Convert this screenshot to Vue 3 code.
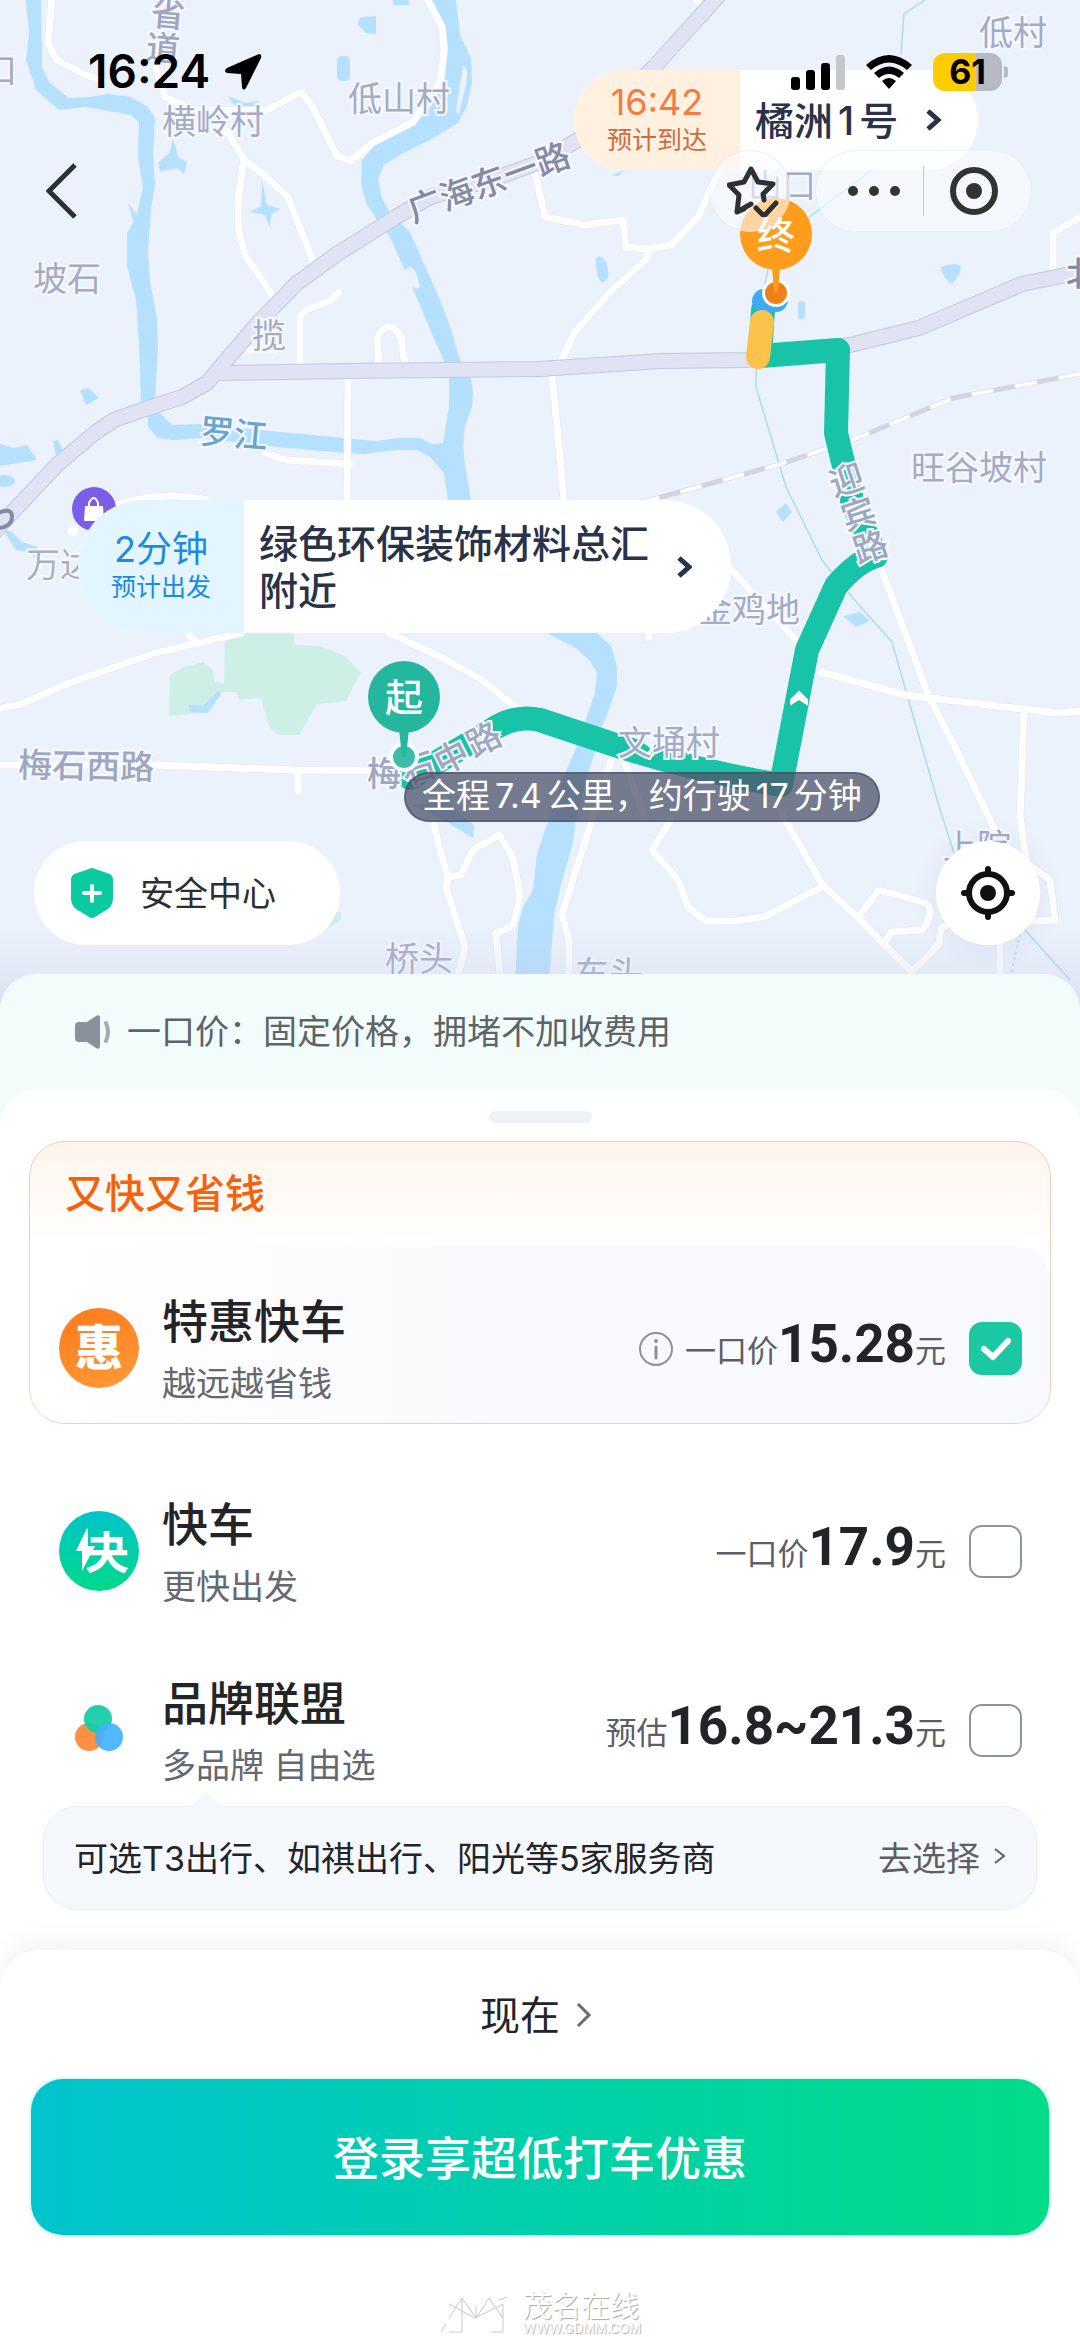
<template>
  <div class="page" lang="zh-CN">
    <section class="map-area">
      <svg class="map" viewBox="0 0 1080 1020" preserveAspectRatio="xMidYMin slice" aria-hidden="true">
        <!-- park -->
        <g fill="#cdefe6">
          <path d="M225 633 L293 633 L295 645 L320 646 L343 655 L361 672 L346 701 L317 704 L299 735 L279 735 L269 727 L261 698 L239 700 L236 692 L222 692 L207 713 L169 716 L170 675 L184 667 L203 662 L213 670 L215 682 L224 683 Z" />
          <path d="M333 912 L341 912 L341 920 L328 928 Z" />
        </g>
        <!-- water -->
        <g fill="#b5e0fe">
          <path d="M26 0 L29 33 L26 60 L36 90 L59 110 L86 107 L131 115 L139 122 L138 157 L143 187 L136 217 L127 233 L127 266 L136 300 L139 344 L141 400 L148 413 L148 427 L158 438 L172 440 L200 438 L268 446 L344 453 L365 454 L396 450 L417 450 L430 457 L444 473 L448 500 L480 560 L547 633 L577 649 L590 661 L597 672 L595 693 L588 713 L574 753 L566 771 L545 830 L537 854 L533 890 L523 907 L518 926 L513 1020 L546 1020 L554 916 L561 884 L573 843 L576 820 L588 773 L597 746 L602 727 L611 704 L617 686 L617 667 L611 646 L597 633 L520 570 L471 500 L465 465 L463 445 L465 426 L472 407 L473 392 L471 378 L461 363 L458 353 L451 329 L440 300 L425 266 L410 232 L390 213 L382 198 L378 179 L384 165 L400 155 L430 140 L458 123 L467 106 L472 82 L471 58 L460 35 L456 0 L430 0 L442 20 L448 44 L445 82 L427 113 L400 131 L375 145 L362 160 L361 184 L366 203 L379 223 L390 237 L403 266 L420 305 L434 339 L444 361 L449 378 L449 407 L443 443 L432 444 L420 438 L400 438 L375 441 L344 438 L270 431 L200 424 L172 425 L160 413 L155 400 L158 348 L157 319 L150 281 L148 252 L151 210 L155 184 L153 155 L155 118 L148 107 L131 97 L108 94 L90 97 L69 98 L50 83 L42 67 L41 0 Z" />
          <path d="M173 138 L178 157 L187 162 L184 174 L177 168 L168 170 L160 171 L158 163 L170 152 Z" />
          <path d="M262 180 L267 205 L281 209 L271 214 L270 228 L265 215 L250 212 L261 206 Z" />
          <path d="M360 17 L376 16 L376 34 L366 33 L358 25 Z" />
          <rect x="337" y="56" width="13" height="25" rx="5" />
          <rect x="393" y="0" width="16" height="5" />
          <path d="M228 96 L245 103 L259 101 L258 106 L235 106 Z" />
          <path d="M128 203 L135 212 L140 222 L133 220 Z" />
          <path d="M80 390 L88 388 L99 398 L86 405 Z" />
          <path d="M0 444 L14 448 L27 445 L37 460 L0 466 Z" />
          <path d="M53 441 L58 440 L65 455 L48 462 L56 456 Z" />
          <ellipse cx="4" cy="481" rx="11" ry="6" />
          <path d="M2 528 L12 532 L22 542 L38 547 L36 560 L30 552 L16 550 Z" />
          <path d="M188 705 L203 706 L219 690 L221 694 L208 713 L190 712 Z" />
          <path d="M412 805 L446 802 L474 825 L473 838 L440 818 Z" />
          <path d="M596 258 Q601 254 606 262 Q612 280 603 282 Q596 282 596 258 Z" />
          <path d="M941 267 Q951 263 961 265 Q961 275 952 284 Q942 278 941 267 Z" />
          <rect x="798" y="301" width="7" height="18" rx="3" />
          <path d="M612 175 L625 170 L618 176 Z" />
          <path d="M776 512 L786 503 L792 512 L783 522 Z" />
          <path d="M843 616 L860 612 L870 621 L856 627 Z" />
        </g>
        <g fill="#ecf2fc">
          <path d="M405 270 Q411 262 417 275 L420 287 Q413 292 408 280 Z" />
          <path d="M463 66 Q469 66 466 85 L459 113 Q455 116 457 104 Z" />
        </g>
        <g fill="none" stroke="#a9dcf8" stroke-width="1.5">
          <path d="M925 0 L904 14 L901 54" />
          <path d="M872 170 L808 218 M768 270 L757 320 L756 387 L768 427 L786 487 L822 560 L852 597 L892 642 L938 803 L954 853 M1024 929 L1070 980" />
          <path d="M1020 934 L1011 974" stroke-dasharray="3 3" />
        </g>

        <!-- small roads -->
        <g class="road-edge"><path v-for="d in roads" :key="d" :d="d" /></g>
        <g class="road"><path v-for="d in roads" :key="d" :d="d" /></g>

        <!-- railway -->
        <path class="rail" d="M1080 374 L953 398 L860 437 L781 464 L640 503" />
        <path class="rail-dash" d="M1080 374 L953 398 L860 437 L781 464 L640 503" />

        <!-- main roads -->
        <g class="main-edge"><path v-for="d in mainRoads" :key="d" :d="d" /></g>
        <g class="main-road"><path v-for="d in mainRoads" :key="d" :d="d" /></g>

        <!-- route -->
        <g fill="none" stroke-width="24" stroke-linecap="round" stroke-linejoin="round">
          <path d="M410 778 L490 731 Q514 714 540 720 L609 743 Q690 770 781 785 L807 650 L836 586 Q856 562 876 556 L852 500 L836 433 L838 350 L760 356 L763 310" stroke="#18c3a8" />
          <path d="M764 301 L776 300" stroke="#3dabf4" />
          <path d="M758 357 L762 322" stroke="#fbc24c" />
        </g>
        <path d="M791 700 L799 692 L807 700 L807 704 L799 699 L791 704 Z" fill="#fff" stroke="#fff" stroke-width="2" />
        <path d="M641 741 L655 744 L649 758 L646 757 L650 748 Z" fill="#fff" />

        <!-- mall poi -->
        <circle cx="94" cy="509" r="22" fill="#7d5de8" />
        <path d="M85 506 H103 L104 521 H84 Z" fill="#fff" />
        <path d="M89 507 V503 Q94 493 98 503 V507" fill="none" stroke="#fff" stroke-width="2" />
        <circle cx="73" cy="531" r="5" fill="#fff" />
        <path d="M-4 514 Q12 506 12 517 Q12 526 0 528" fill="none" stroke="#858ba4" stroke-width="4" />

        <text
          v-for="(t, i) in labels"
          :key="i"
          :class="['label', t.kind]"
          :transform="`translate(${t.x} ${t.y}) rotate(${t.r || 0})`"
        >{{ t.text }}</text>

        <!-- start marker -->
        <circle cx="404" cy="757" r="15" fill="#fff" />
        <circle cx="404" cy="757" r="11" fill="#3fbca7" />
        <path d="M399 729 H409 L406 757 H402 Z" fill="#25b79d" />
        <circle cx="404" cy="697" r="36" fill="#25b79d" />
        <text class="pin-text" x="404" y="711">起</text>
        <!-- end marker -->
        <circle cx="776" cy="293" r="14" fill="#fff" />
        <circle cx="776" cy="293" r="11" fill="#f0801a" />
        <path d="M772 268 H780 L778 292 H774 Z" fill="#ff9c1c" />
        <circle cx="776" cy="234" r="36" fill="#ff9c1c" />
        <text class="pin-text" x="776" y="249">终</text>
      </svg>

      <button class="trip-badge to">
        <span class="time"><b>16:42</b><small>预计到达</small></span>
        <span class="place">橘洲<i>1</i>号</span>
        <svg width="16" height="24" viewBox="0 0 16 24"><path d="M3 3 L13 12 L3 21" /></svg>
      </button>
      <button class="trip-badge from">
        <span class="time"><b>2分钟</b><small>预计出发</small></span>
        <span class="place">绿色环保装饰材料总汇<br>附近</span>
        <svg width="16" height="24" viewBox="0 0 16 24"><path d="M3 3 L13 12 L3 21" /></svg>
      </button>
      <div class="summary">全程<i>7.4</i>公里，约行驶<i>17</i>分钟</div>

      <header class="status-bar">
        <span class="clock">16:24</span>
        <svg class="locate-arrow" width="38" height="38" viewBox="0 0 38 38">
          <path d="M35 1 Q38 1 37 5 L22 35 Q19 39 18 34 L17 21 L3 20 Q-1 18 3 15 Z" />
        </svg>
        <svg width="54" height="36" viewBox="0 0 54 36">
          <rect x="0" y="23" width="9" height="13" rx="3" />
          <rect x="15" y="16" width="9" height="20" rx="3" />
          <rect x="30" y="9" width="9" height="27" rx="3" />
          <rect x="45" y="1" width="9" height="35" rx="3" fill="#c6c7ca" />
        </svg>
        <svg class="wifi" width="46" height="36" viewBox="0 0 46 36">
          <path d="M0 11 Q23 -9 46 11 L41 16 Q23 1 5 16 Z" />
          <path d="M8 19 Q23 6 38 19 L33 24 Q23 16 13 24 Z" />
          <path d="M16 27 Q23 21 30 27 L23 35 Z" />
        </svg>
        <span class="battery">61</span>
      </header>

      <nav class="nav-bar">
        <button class="back" aria-label="返回">
          <svg width="32" height="56" viewBox="0 0 32 56"><path d="M29 2 L3 28 L29 54" /></svg>
        </button>
        <button class="glass star" aria-label="收藏">
          <svg width="52" height="52" viewBox="0 0 52 52">
            <path d="M17 44 L10 47 L12 30 L2 20 L17 17 L24 4 L31 17 L46 19 L36 29 L37 35 M10 47 L24 39" />
            <path d="M29 43 L37 51 L49 38" />
          </svg>
        </button>
        <div class="glass capsule">
          <button class="more" aria-label="更多">
            <svg width="54" height="12" viewBox="0 0 54 12">
              <circle cx="6" cy="6" r="5" /><circle cx="27" cy="6" r="5" /><circle cx="48" cy="6" r="5" />
            </svg>
          </button>
          <span class="divider"></span>
          <button class="close" aria-label="关闭">
            <svg width="50" height="50" viewBox="0 0 50 50">
              <circle cx="25" cy="25" r="21" fill="none" stroke="#333" stroke-width="6" />
              <circle cx="25" cy="25" r="8" />
            </svg>
          </button>
        </div>
      </nav>

      <div class="map-tools">
        <button class="safety">
          <svg width="44" height="50" viewBox="0 0 44 50">
            <path d="M19 1 Q22 -1 25 1 L40 6 Q43 8 43 11 V30 Q43 37 38 41 L25 49 Q22 51 19 49 L6 41 Q1 37 1 30 V11 Q1 8 4 6 Z" fill="#09cb9f" />
            <path d="M22 18 V33 M14 25 H30" stroke="#fff" stroke-width="4" stroke-linecap="round" />
          </svg>
          <span>安全中心</span>
        </button>
        <button class="locate" aria-label="定位">
          <svg width="54" height="54" viewBox="0 0 54 54">
            <circle cx="27" cy="27" r="19" fill="none" stroke="#111" stroke-width="6" />
            <circle cx="27" cy="27" r="8" fill="#111" />
            <path d="M27 3 V8 M27 46 V51 M3 27 H8 M46 27 H51" stroke="#111" stroke-width="6" stroke-linecap="round" />
          </svg>
        </button>
      </div>
    </section>

    <main class="sheet">
      <p class="notice">
        <svg width="36" height="34" viewBox="0 0 36 34">
          <path d="M4 7 H12 L21 1 Q25 -1 25 3 V31 Q25 35 21 33 L12 27 H4 Q0 27 0 23 V11 Q0 7 4 7 Z" fill="#8a909c" />
          <path d="M31 8 Q35 17 31 26" fill="none" stroke="#a4a9b3" stroke-width="4" stroke-linecap="round" />
        </svg>
        <span>一口价：固定价格，拥堵不加收费用</span>
      </p>

      <div class="list">
        <div class="handle"></div>

        <section class="promo">
          <h2>又快又省钱</h2>
          <div class="option picked">
            <svg class="logo" viewBox="0 0 81 81">
              <defs>
                <linearGradient id="hui" x1="0" y1="0" x2="0.4" y2="1">
                  <stop offset="0" stop-color="#ff7a1c" /><stop offset="1" stop-color="#ff9533" />
                </linearGradient>
              </defs>
              <circle cx="40" cy="40" r="40" fill="url(#hui)" />
              <text x="40" y="57" class="logo-text">惠</text>
            </svg>
            <div class="info"><h3>特惠快车</h3><p>越远越省钱</p></div>
            <button class="tip-icon" aria-label="价格说明">
              <svg width="34" height="34" viewBox="0 0 34 34">
                <circle cx="17" cy="17" r="16" fill="none" stroke="#8d9199" stroke-width="2" />
                <circle cx="17" cy="9" r="2" fill="#8d9199" />
                <path d="M17 15 V26" stroke="#8d9199" stroke-width="3" stroke-linecap="round" />
              </svg>
            </button>
            <div class="price">一口价<strong>15.28</strong>元</div>
            <label class="check">
              <input v-model="picked" type="checkbox" value="hui" aria-label="特惠快车">
              <svg v-if="picked.includes('hui')" viewBox="0 0 53 53"><path d="M15 27 L24 35 L39 19" /></svg>
            </label>
          </div>
        </section>

        <div class="option">
          <svg class="logo" viewBox="0 0 81 81">
            <defs>
              <linearGradient id="kuai" x1="0" y1="0" x2="0" y2="1">
                <stop offset="0" stop-color="#00c4ca" /><stop offset="1" stop-color="#02d98a" />
              </linearGradient>
            </defs>
            <circle cx="40" cy="40" r="40" fill="url(#kuai)" />
            <path d="M28 17 L17 40 H23 V60 L36 35 H29 V19 Z" fill="#fff" />
            <text x="48" y="58" class="logo-text small">夬</text>
          </svg>
          <div class="info"><h3>快车</h3><p>更快出发</p></div>
          <div class="price">一口价<strong>17.9</strong>元</div>
          <label class="check">
            <input v-model="picked" type="checkbox" value="kuai" aria-label="快车">
            <svg v-if="picked.includes('kuai')" viewBox="0 0 53 53"><path d="M15 27 L24 35 L39 19" /></svg>
          </label>
        </div>

        <div class="option">
          <svg class="logo" viewBox="0 0 81 81">
            <circle cx="30" cy="47" r="14" fill="#ff8f45" />
            <circle cx="39" cy="29" r="14" fill="#16cda6" fill-opacity="0.95" />
            <circle cx="50" cy="47" r="14" fill="#3fb0ff" fill-opacity="0.9" />
          </svg>
          <div class="info"><h3>品牌联盟</h3><p>多品牌 自由选</p></div>
          <div class="price">预估<strong>16.8~21.3</strong>元</div>
          <label class="check">
            <input v-model="picked" type="checkbox" value="brand" aria-label="品牌联盟">
            <svg v-if="picked.includes('brand')" viewBox="0 0 53 53"><path d="M15 27 L24 35 L39 19" /></svg>
          </label>
        </div>

        <div class="brands">
          <span>可选T3出行、如祺出行、阳光等5家服务商</span>
          <button>
            <span>去选择</span>
            <svg width="12" height="18" viewBox="0 0 12 18"><path d="M1 2 L10 9 L1 16" /></svg>
          </button>
        </div>
      </div>
    </main>

    <footer class="order">
      <button class="when">
        <span>现在</span>
        <svg width="16" height="26" viewBox="0 0 16 26"><path d="M2 2 L13 13 L2 24" /></svg>
      </button>
      <button class="submit">登录享超低打车优惠</button>
      <div class="watermark">
        <svg width="76" height="38" viewBox="0 0 76 38">
          <path d="M10 8 L36 22 L64 8 M10 22 L23 2 L37 22 L50 2 L64 22 M23 2 V36 H10 M64 8 V36 H52 M37 10 V22 M2 36 L7 28 M60 4 L68 1" />
        </svg>
        <div><b>茂名在线</b><small>WWW.GDMM.COM</small></div>
      </div>
    </footer>
  </div>
</template>

<script setup>
import { ref } from 'vue'

const picked = ref(['hui'])

const mainRoads = [
  'M220 373 L344 371 L540 369 L660 361 L747 360 L850 345 L919 328 L1022 284 L1090 270',
  'M722 -8 L654 67 L578 140 L540 162 L499 177 L430 197 L396 217 L337 254 L296 284 L258 323 L224 363 L207 383 L182 397 L145 409 L114 420 L96 432 L58 464 L3 522 L-12 540'
]

const roads = [
  'M52 -5 L48 44 L57 60 L83 74 L103 81',
  'M156 68 L165 97 L193 110 L224 127 L244 159 L265 176 L288 197 L315 266',
  'M244 159 L238 200 L239 233 L246 257 L265 284 L275 300',
  'M193 110 L265 111 L301 92 L312 106 L337 156 L351 161 L372 143 L413 122 L440 82 L444 50 L442 27 L425 -5',
  'M300 365 V317 L306 310 L331 300 L339 292',
  'M379 365 L377 337 Q389 316 401 337 L405 365',
  'M348 379 L347 500',
  'M265 453 L286 460 L351 464',
  'M248 350 L275 350',
  'M535 173 L545 217 L585 225 L623 220 L626 247 L647 249 L671 245 L698 217 L719 170',
  'M648 249 V258 L612 290 L574 333 L561 362',
  'M552 375 L564 500',
  'M692 -5 L702 7',
  'M1084 215 L1053 233 V270',
  'M117 505 Q160 490 207 500',
  'M-4 709 L21 704 L69 683 L155 653 L241 633',
  'M189 635 L198 644',
  'M389 633 L441 657 L482 680 L517 708',
  'M-4 765 L158 765 L293 770 L406 771',
  'M298 770 V792',
  'M729 567 L795 639',
  'M821 672 L905 695 L988 705 L1057 713 L1084 711',
  'M881 568 L929 697 L953 743 L995 830',
  'M1024 711 L1020 817 L1027 863 L1050 880 L1055 920 L1032 921',
  'M781 813 L822 884 L857 917 L912 972 L939 944 L941 928 L960 920',
  'M671 820 L652 850 L678 880 L688 907 L705 921 L736 921 L764 917 L822 887',
  'M860 915 L879 890 L926 903 Q936 912 922 930 L891 932 L884 945',
  'M612 757 L562 914 L569 940 V985',
  'M623 757 L643 813',
  'M434 824 L439 847 L448 877 L446 887 L465 947 L456 985',
  'M448 877 L461 875 L473 850 L499 835 L513 857 L520 896 L513 926 L496 933 L501 985',
  'M1000 944 V985',
  'M649 638 V630'
]

const labels = [
  { text: '口', x: -17, y: 83 },
  { text: '省', x: 150, y: 25, r: 5, kind: 'strong' },
  { text: '道', x: 145, y: 59, r: 5, kind: 'strong' },
  { text: '横岭村', x: 162, y: 134 },
  { text: '低山村', x: 348, y: 111 },
  { text: '坡石', x: 33, y: 291 },
  { text: '揽', x: 252, y: 348 },
  { text: '罗江', x: 199, y: 443, r: 5, kind: 'water' },
  { text: '广海东一路', x: 413, y: 223, r: -20, kind: 'dark' },
  { text: '低村', x: 979, y: 45 },
  { text: '山口', x: 748, y: 198 },
  { text: '北', x: 1066, y: 286, kind: 'dark' },
  { text: '旺谷坡村', x: 911, y: 480 },
  { text: '迎', x: 834, y: 497, r: -18, kind: 'strong' },
  { text: '宾', x: 846, y: 531, r: -18, kind: 'strong' },
  { text: '路', x: 858, y: 564, r: -18, kind: 'strong' },
  { text: '金鸡地', x: 698, y: 622 },
  { text: '文埇村', x: 618, y: 755 },
  { text: '万达', x: 26, y: 577, kind: 'grey' },
  { text: '梅石西路', x: 18, y: 777, r: 1, kind: 'strong' },
  { text: '梅', x: 367, y: 786, kind: 'strong' },
  { text: '石', x: 406, y: 785, r: -18, kind: 'strong' },
  { text: '中', x: 442, y: 776, r: -27, kind: 'strong' },
  { text: '路', x: 474, y: 758, r: -27, kind: 'strong' },
  { text: '桥头', x: 385, y: 971 },
  { text: '车头', x: 575, y: 986 },
  { text: '上院', x: 943, y: 859 }
]
</script>

<style>
body { margin: 0; background: #fff; }
</style>

<style scoped>
.page {
  font-family: Inter, "Noto Sans CJK SC", sans-serif;
  color: #222427;
  min-height: 100vh;
  display: flex;
  flex-direction: column;
}
button { font-family: inherit; border: none; background: none; padding: 0; margin: 0; cursor: pointer; color: inherit; }
h2, h3, p { margin: 0; font-weight: 500; }
i { font-style: normal; }
svg { display: block; flex: none; }

/* map */
.map-area { position: relative; height: 1014px; background: #ecf2fc; display: flex; flex-direction: column; overflow: hidden; }
.map { position: absolute; inset: 0; width: 100%; height: 100%; }
.map-area::after {
  content: ''; position: absolute; left: 0; right: 0; bottom: 0; height: 90px;
  background: linear-gradient(rgba(200, 206, 228, 0), rgba(200, 206, 228, 0.5)); pointer-events: none;
}
.road, .road-edge, .main-road, .main-edge { fill: none; stroke-linejoin: round; stroke-linecap: round; }
.road-edge { stroke: #e0e5f1; stroke-width: 8px; }
.road { stroke: #fff; stroke-width: 7px; }
.main-edge { stroke: #c5c8da; stroke-width: 16px; }
.main-road { stroke: #dfe3f3; stroke-width: 14px; }
.rail { fill: none; stroke: #d3d6e2; stroke-width: 5px; }
.rail-dash { fill: none; stroke: #fff; stroke-width: 4px; stroke-dasharray: 22px 22px; }
.label { font-size: 34px; fill: #a3abc6; stroke: #f6f9fe; stroke-width: 4px; paint-order: stroke; }
.label.strong { font-weight: 500; fill: #9ea6c2; }
.label.dark { font-weight: 500; fill: #858ba4; }
.label.water { font-weight: 500; fill: #6aa5d2; }
.label.grey { fill: #adb1bf; }
.pin-text { font-size: 38px; font-weight: 500; fill: #fff; text-anchor: middle; }

.trip-badge { position: absolute; display: flex; align-items: center; background: #fff; overflow: hidden; text-align: left; color: #2a3248; }
.trip-badge .time { align-self: stretch; display: flex; flex-direction: column; justify-content: center; align-items: center; width: 166px; box-sizing: border-box; }
.trip-badge b { font-size: 36px; line-height: 40px; font-weight: 400; }
.trip-badge small { font-size: 25px; line-height: 36px; }
.trip-badge .place { font-size: 39px; line-height: 47px; font-weight: 500; padding-left: 15px; }
.trip-badge .place i { margin: 0 5px; }
.trip-badge svg { fill: none; stroke: #2a3248; stroke-width: 5; margin-left: 27px; }
.to { left: 574px; top: 70px; width: 404px; height: 100px; border-radius: 50px; }
.to .time { background: #fff0e0; color: #f57b45; }
.to small { color: #cf6a3c; }
.from { left: 78px; top: 500px; width: 653px; height: 133px; border-radius: 66px; }
.from .time { background: #e3f5ff; color: #1b8be0; }
.summary {
  position: absolute; left: 404px; top: 772px; height: 50px; padding: 0 16px; border-radius: 25px;
  box-sizing: border-box; border: 2px solid rgba(70, 76, 98, 0.5); background: rgba(77, 83, 105, 0.75);
  color: #fff; font-size: 34px; line-height: 44px; white-space: nowrap;
}
.summary i { margin: 0 5px; }

.status-bar { position: relative; display: flex; align-items: center; height: 37px; padding: 53px 78px 60px 88px; }
.clock { font-size: 46px; line-height: 37px; font-weight: 600; color: #000; }
.locate-arrow { margin-left: 14px; margin-right: auto; }
.wifi { margin: 0 21px; }
.battery {
  position: relative; width: 69px; height: 38px; border-radius: 12px; text-align: center;
  font-size: 34px; line-height: 38px; font-weight: 700; color: #000;
  background: linear-gradient(90deg, #ffcc00 62%, #b7bac4 62%);
}
.battery::after { content: ''; position: absolute; left: 71px; top: 13px; width: 4px; height: 12px; border-radius: 0 4px 4px 0; background: #b7bac4; }

.nav-bar { position: relative; display: flex; align-items: center; padding: 0 48px 0 46px; }
.back { margin-right: auto; }
.back svg { fill: none; stroke: #2e2f31; stroke-width: 5; }
.glass { height: 82px; box-sizing: border-box; background: rgba(250, 251, 254, 0.6); border: 1px solid rgba(225, 228, 238, 0.5); border-radius: 41px; }
.star { width: 82px; display: grid; place-items: center; padding-left: 6px; }
.star svg { fill: none; stroke: #2f3032; stroke-width: 5; stroke-linecap: round; stroke-linejoin: round; }
.capsule { display: flex; align-items: center; width: 217px; margin-left: 24px; }
.capsule button { flex: 1; display: grid; place-items: center; fill: #333; }
.capsule .more { padding-left: 8px; }
.capsule .close { padding-right: 8px; }
.divider { width: 1px; height: 50px; background: #c5c8d0; }

.map-tools { position: relative; z-index: 1; display: flex; justify-content: space-between; margin-top: auto; padding: 0 40px 69px 34px; }
.safety { display: flex; align-items: center; gap: 26px; height: 104px; padding: 0 64px 0 36px; border-radius: 52px; background: #fff; font-size: 34px; color: #2d2e30; }
.safety span, .notice span, .brands span, .when span { padding-bottom: 4px; }
.locate { width: 104px; height: 104px; border-radius: 50%; background: #fff; display: grid; place-items: center; box-shadow: 0 2px 30px rgba(60, 70, 110, 0.08); }

/* sheet */
.sheet { position: relative; z-index: 2; margin-top: -40px; border-radius: 36px 36px 0 0; background: #f2fdfb; }
.notice { display: flex; align-items: center; gap: 16px; height: 115px; padding: 0 75px; font-size: 34px; font-weight: 400; color: #5d6467; }
.list { background: #fff; border-radius: 36px 36px 0 0; padding: 22px 29px 40px; }
.handle { width: 103px; height: 12px; border-radius: 6px; background: #eef1f6; margin: 0 auto 18px; }
.promo { border: 1px solid #f3cdbb; border-radius: 36px; margin-bottom: 24px; overflow: hidden; background: linear-gradient(#fff4ec, #fff 104px); }
.promo h2 { font-size: 40px; line-height: 104px; padding-left: 35px; color: #f5620c; }

.option { display: flex; align-items: center; box-sizing: border-box; min-height: 179px; padding: 28px 29px 0 30px; }
.picked { min-height: 177px; padding: 28px 28px 0 29px; border-radius: 0 36px 0 0; background: linear-gradient(90deg, #fff, #fafafd 40%, #f7f9fd); }
.logo { width: 81px; height: 81px; }
.logo-text { font-size: 48px; font-weight: 900; fill: #fff; text-anchor: middle; }
.logo-text.small { font-size: 44px; font-weight: 700; }
.info { margin: 0 auto 0 22px; }
.info h3 { font-size: 46px; line-height: 54px; }
.info p { margin-top: 16px; font-size: 34px; line-height: 40px; font-weight: 400; color: #65686e; }
.tip-icon { margin-right: 12px; }
.price { display: flex; align-items: baseline; padding-bottom: 10px; font-size: 31px; color: #5c5e63; }
.price strong { font-family: Roboto, sans-serif; font-size: 53px; line-height: 64px; font-weight: 700; color: #222427; }
.check { position: relative; width: 53px; height: 53px; margin-left: 23px; }
.check input { appearance: none; display: block; width: 53px; height: 53px; margin: 0; border: 2px solid #8f939b; border-radius: 13px; background: #fff; }
.check input:checked { border-color: #1bc8a4; background: #1bc8a4; }
.check svg { position: absolute; inset: 0; fill: none; stroke: #fff; stroke-width: 6; stroke-linecap: round; stroke-linejoin: round; pointer-events: none; }

.brands {
  position: relative; display: flex; justify-content: space-between; align-items: center; height: 104px; box-sizing: border-box;
  margin: 0 14px; padding: 0 30px; border: 1px solid #ebeff4; border-radius: 34px; background: #f5f8fc; font-size: 34px;
}
.brands::before {
  content: ''; position: absolute; left: 145px; top: -16px; border: 17px solid transparent; border-top: 0; border-bottom-color: #f5f8fc;
}
.brands button { display: flex; align-items: center; gap: 14px; font-size: 34px; color: #5c5f64; }
.brands button span { padding-bottom: 0; }
.brands button { padding-bottom: 4px; }
.brands svg { fill: none; stroke: #5c5f64; stroke-width: 2; }

/* order */
.order { position: relative; z-index: 3; flex: 1; display: flex; flex-direction: column; align-items: center; border-radius: 40px 40px 0 0; background: #fff; box-shadow: 0 -8px 30px rgba(0, 0, 0, 0.05); }
.when { display: flex; align-items: center; gap: 16px; height: 129px; padding-right: 8px; font-size: 40px; }
.when svg { fill: none; stroke: #6b6e78; stroke-width: 3; }
.submit {
  align-self: stretch; margin: 0 31px; height: 156px; padding-bottom: 4px; border-radius: 32px; color: #fff; font-size: 46px; font-weight: 500;
  background: linear-gradient(90deg, #00c3cf, #00dc87); box-shadow: 0 0 2px 2px #d8f7f2;
}
.watermark { display: flex; align-items: center; gap: 8px; margin-top: 58px; color: #fff; text-shadow: 1px 1px 1px #a8a8a8; }
.watermark svg { fill: none; stroke: #c9c9c9; stroke-width: 1; }
.watermark b { display: block; font-size: 29px; line-height: 28px; font-weight: 400; }
.watermark small { display: block; font-size: 13px; line-height: 15px; }
</style>
